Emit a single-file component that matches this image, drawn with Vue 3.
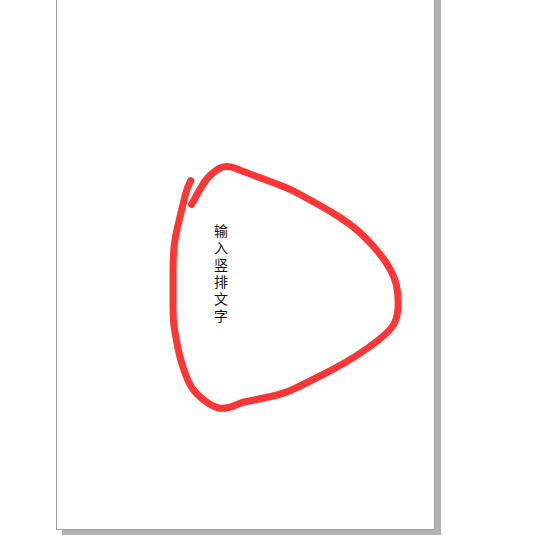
<template>
  <div class="desk">
    <div class="sheet">
      <!-- freehand loop drawn on the sheet -->
      <svg class="ink" width="559" height="539" viewBox="0 0 559 539">
        <path
          :d="loopPath"
          fill="none"
          stroke="#ff3636"
          stroke-width="7"
          stroke-linecap="round"
          stroke-linejoin="round"
        />
      </svg>
      <div class="vtext">输入竖排文字</div>
    </div>
  </div>
</template>

<script setup>
// hand traced points of the stroke
const points = [
  [190.7, 180.7], [187, 188], [184, 200], [180, 217], [175, 237], [173, 257], [173, 290], [173, 321],
  [176, 338], [179, 354], [184, 371], [191, 388], [203, 400], [215, 407.5], [223, 408.5],
  [232, 407], [241, 402.5], [257, 399.5], [285, 393.5], [310, 381], [332, 370], [355, 357], [379, 340],
  [392, 328], [397, 318], [398.5, 303], [397, 285], [391, 270], [381, 255], [365, 237],
  [350, 224], [330, 211], [310, 200], [292, 190], [277, 184], [258, 177], [237, 169],
  [231, 166.5], [222, 166.5], [215, 171], [207, 178], [200, 189], [191.5, 204.5],
];

// quadratic curves through the midpoints, so the line has no corners
const loopPath = points.reduce((d, p, i) => {
  if (i === 0) return `M${p[0]} ${p[1]}`;
  if (i === points.length - 1) return `${d} L${p[0]} ${p[1]}`;
  const next = points[i + 1];
  return `${d} Q${p[0]} ${p[1]} ${(p[0] + next[0]) / 2} ${(p[1] + next[1]) / 2}`;
}, "");
</script>

<style scoped>
.desk {
  width: 559px;
  height: 539px;
  overflow: hidden;
  background: #ffffff;
}

.sheet {
  position: relative;
  box-sizing: border-box;
  width: 379px;
  height: 540px;
  margin-left: 56px;
  transform: translateY(-10px);
  border: 1px solid #a0a0a0;
  background: #ffffff;
  box-shadow: 6px 5px 0 #b2b2b2;
}

.ink {
  position: absolute;
  left: -57px;
  top: 9px;
}

.vtext {
  position: absolute;
  left: 156px;
  top: 233px;
  writing-mode: vertical-rl;
  font-family: "Noto Sans CJK SC", "Liberation Sans", sans-serif;
  font-size: 14px;
  line-height: 16px;
  letter-spacing: 3px;
  color: #111111;
}
</style>

<style>
html,
body {
  margin: 0;
  overflow: hidden;
  background: #ffffff;
}
</style>
